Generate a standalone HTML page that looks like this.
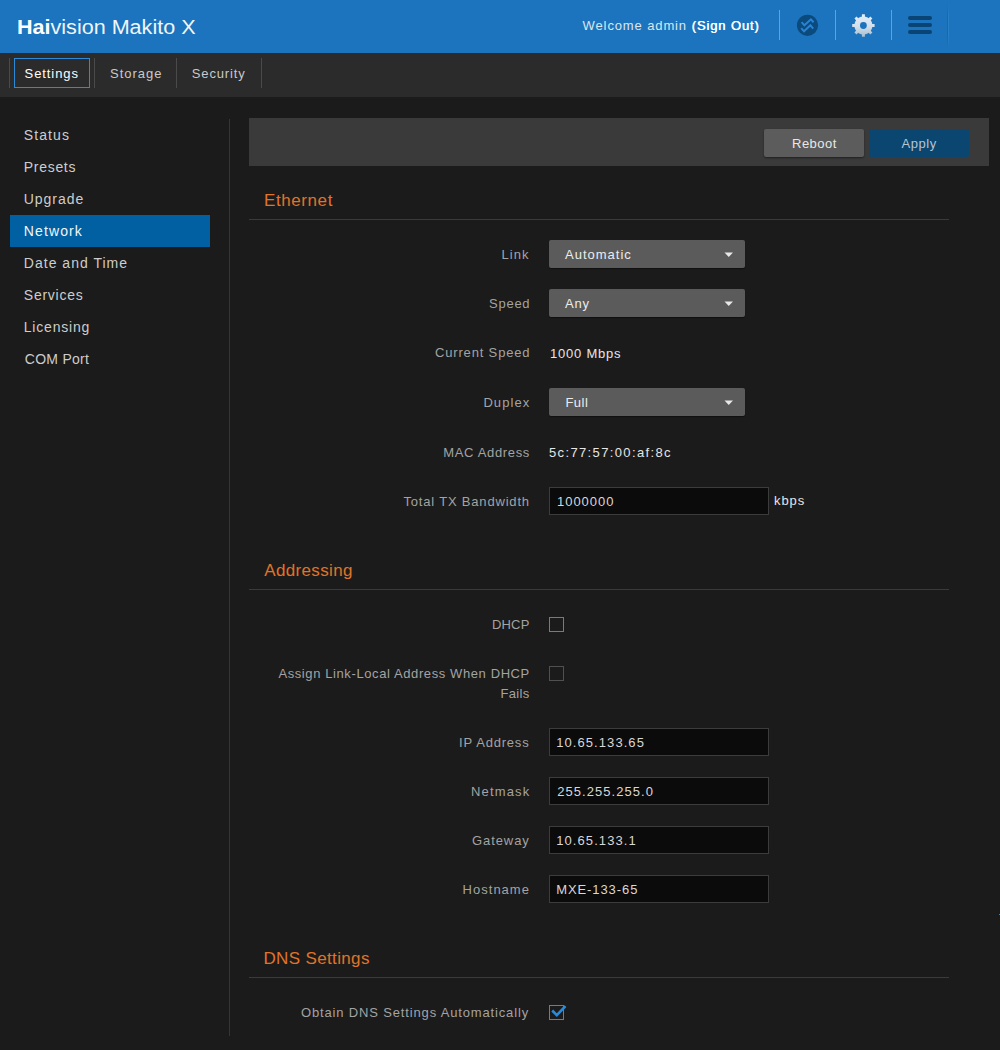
<!DOCTYPE html>
<html><head><meta charset="utf-8"><title>Haivision Makito X - Network</title>
<style>
html,body{margin:0;padding:0;}
body{width:1000px;height:1050px;overflow:hidden;background:#1b1b1b;position:relative;font-family:"Liberation Sans",sans-serif;}
.t{position:absolute;white-space:nowrap;line-height:normal;font-family:"Liberation Sans",sans-serif;}
.b{position:absolute;box-sizing:border-box;}
</style></head><body>
<!-- header -->
<div class="b" style="left:0;top:0;width:1000px;height:53px;background:#1b74bd"></div>
<div class="b" style="left:779px;top:10px;width:1px;height:30px;background:#6b9fcc"></div>
<div class="b" style="left:835px;top:10px;width:1px;height:30px;background:#6b9fcc"></div>
<div class="b" style="left:891px;top:10px;width:1px;height:30px;background:#6b9fcc"></div>
<div class="b" style="left:947px;top:4px;width:1px;height:44px;background:linear-gradient(#1b74bd,#1868ad 30%,#1868ad 70%,#1b74bd)"></div>
<div class="b" style="left:948px;top:4px;width:1px;height:44px;background:linear-gradient(#1b74bd,#2a80c6 30%,#2a80c6 70%,#1b74bd)"></div>
<svg class="b" style="left:790px;top:8px" width="36" height="36" viewBox="790 8 36 36">
 <circle cx="807.5" cy="25.3" r="10.6" fill="#0a4a7c"/>
 <polyline points="801.6,22.2 804.4,25.3 810.9,19.3 813.6,22.2" fill="none" stroke="#2a82d0" stroke-width="2"/>
 <polyline points="801.2,28.2 804,31.3 810.4,25.3 813.2,28.6" fill="none" stroke="#2a82d0" stroke-width="2"/>
</svg>
<svg class="b" style="left:848px;top:10px" width="32" height="32" viewBox="848 10 32 32">
 <defs><linearGradient id="gg" x1="0" y1="0" x2="0" y2="1"><stop offset="0" stop-color="#e4eef7"/><stop offset="0.55" stop-color="#d2dfeb"/><stop offset="1" stop-color="#a8bccc"/></linearGradient></defs>
 <path d="M861.84 16.64 L861.93 14.30 L864.87 14.30 L864.96 16.64 L865.92 16.86 L866.84 17.19 L867.73 17.61 L868.56 18.13 L870.28 16.54 L872.36 18.62 L870.77 20.34 L871.29 21.17 L871.71 22.06 L872.04 22.98 L872.26 23.94 L874.60 24.03 L874.60 26.97 L872.26 27.06 L872.04 28.02 L871.71 28.94 L871.29 29.83 L870.77 30.66 L872.36 32.38 L870.28 34.46 L868.56 32.87 L867.73 33.39 L866.84 33.81 L865.92 34.14 L864.96 34.36 L864.87 36.70 L861.93 36.70 L861.84 34.36 L860.88 34.14 L859.96 33.81 L859.07 33.39 L858.24 32.87 L856.52 34.46 L854.44 32.38 L856.03 30.66 L855.51 29.83 L855.09 28.94 L854.76 28.02 L854.54 27.06 L852.20 26.97 L852.20 24.03 L854.54 23.94 L854.76 22.98 L855.09 22.06 L855.51 21.17 L856.03 20.34 L854.44 18.62 L856.52 16.54 L858.24 18.13 L859.07 17.61 L859.96 17.19 L860.88 16.86 Z M863.4 22.1 A3.4 3.4 0 1 0 863.4 28.9 A3.4 3.4 0 1 0 863.4 22.1 Z" fill="url(#gg)" fill-rule="evenodd"/>
</svg>
<div class="b" style="left:908px;top:16px;width:24px;height:4px;border-radius:2px;background:#0a4474"></div>
<div class="b" style="left:908px;top:23px;width:24px;height:4px;border-radius:2px;background:#0a4474"></div>
<div class="b" style="left:908px;top:30px;width:24px;height:4px;border-radius:2px;background:#0a4474"></div>
<!-- tab bar -->
<div class="b" style="left:0;top:53px;width:1000px;height:44px;background:#2b2b2b"></div>
<div class="b" style="left:9px;top:58px;width:1px;height:30px;background:#4a4a4a"></div>
<div class="b" style="left:14px;top:58px;width:76px;height:30px;border:1px solid #2a8ad8"></div>
<div class="b" style="left:94px;top:58px;width:1px;height:30px;background:#4a4a4a"></div>
<div class="b" style="left:176px;top:58px;width:1px;height:30px;background:#4a4a4a"></div>
<div class="b" style="left:261px;top:58px;width:1px;height:30px;background:#4a4a4a"></div>
<!-- sidebar -->
<div class="b" style="left:10px;top:215px;width:200px;height:32px;background:#0060a2"></div>
<div class="b" style="left:229px;top:119px;width:1px;height:917px;background:#353535"></div>
<!-- toolbar -->
<div class="b" style="left:249px;top:118px;width:740px;height:48px;background:#3a3a3a"></div>
<div class="b" style="left:764px;top:129px;width:100px;height:28px;background:#5c5c5c;border-radius:2px;box-shadow:0 1px 2px rgba(0,0,0,.45)"></div>
<div class="b" style="left:869px;top:129px;width:100px;height:28px;background:#0b4671;border-radius:2px"></div>
<!-- section dividers -->
<div class="b" style="left:249px;top:219px;width:700px;height:1px;background:#3a3a3a"></div>
<div class="b" style="left:249px;top:589px;width:700px;height:1px;background:#3a3a3a"></div>
<div class="b" style="left:249px;top:977px;width:700px;height:1px;background:#3a3a3a"></div>
<!-- selects -->
<div class="b" style="left:549px;top:240px;width:196px;height:28px;background:#5b5b5b;border-radius:2px;box-shadow:0 1px 1px rgba(0,0,0,.4)"></div>
<div class="b" style="left:549px;top:289px;width:196px;height:28px;background:#5b5b5b;border-radius:2px;box-shadow:0 1px 1px rgba(0,0,0,.4)"></div>
<div class="b" style="left:549px;top:388px;width:196px;height:28px;background:#5b5b5b;border-radius:2px;box-shadow:0 1px 1px rgba(0,0,0,.4)"></div>
<svg class="b" style="left:724px;top:252px" width="10" height="6"><path d="M0.5 0.5 H9 L4.75 5 Z" fill="#e8e8e8"/></svg>
<svg class="b" style="left:724px;top:301px" width="10" height="6"><path d="M0.5 0.5 H9 L4.75 5 Z" fill="#e8e8e8"/></svg>
<svg class="b" style="left:724px;top:400px" width="10" height="6"><path d="M0.5 0.5 H9 L4.75 5 Z" fill="#e8e8e8"/></svg>
<!-- inputs -->
<div class="b" style="left:549px;top:487px;width:220px;height:28px;background:#0b0b0b;border:1px solid #3c3c3c"></div>
<div class="b" style="left:549px;top:728px;width:220px;height:28px;background:#0b0b0b;border:1px solid #3c3c3c"></div>
<div class="b" style="left:549px;top:777px;width:220px;height:28px;background:#0b0b0b;border:1px solid #3c3c3c"></div>
<div class="b" style="left:549px;top:826px;width:220px;height:28px;background:#0b0b0b;border:1px solid #3c3c3c"></div>
<div class="b" style="left:549px;top:875px;width:220px;height:28px;background:#0b0b0b;border:1px solid #3c3c3c"></div>
<!-- checkboxes -->
<div class="b" style="left:549px;top:617px;width:15px;height:15px;border:1px solid #7a7a7a"></div>
<div class="b" style="left:549px;top:666px;width:15px;height:15px;border:1px solid #505050"></div>
<div class="b" style="left:549px;top:1005px;width:15px;height:15px;border:1px solid #7a7a7a"></div>
<svg class="b" style="left:548px;top:1002px" width="20" height="20" viewBox="548 1002 20 20"><polyline points="552.2,1010.5 556.8,1015.2 565.5,1006.2" fill="none" stroke="#2b8ad6" stroke-width="2.6" stroke-linecap="butt"/></svg>
<div class="b" style="left:999px;top:914px;width:1px;height:1px;background:#2a8ad8"></div>
<div class="t" id="logo" style="left:16.6px;top:16px;font-size:20px;color:#fff;transform:scaleX(1.078);transform-origin:0 0"><b style="font-weight:700">Hai</b><span style="color:#f2f5f8">vision Makito X</span></div>
<div id="welcome" class="t" style="left:582.60px;top:18.20px;font-size:13px;color:#dde6ee;letter-spacing:0.878px">Welcome admin <span style="color:#fff;text-shadow:0.5px 0 0 #fff">(Sign Out)</span></div>
<div id="tab1" class="t" style="left:24.60px;top:66.00px;font-size:13px;color:#ffffff;letter-spacing:0.914px">Settings</div>
<div id="tab2" class="t" style="left:110.00px;top:66.00px;font-size:13px;color:#c9c9c9;letter-spacing:1.000px">Storage</div>
<div id="tab3" class="t" style="left:191.80px;top:66.00px;font-size:13px;color:#c9c9c9;letter-spacing:0.857px">Security</div>
<div id="side0" class="t" style="left:23.80px;top:127.00px;font-size:14px;color:#cdcdcd;letter-spacing:1.080px">Status</div>
<div id="side1" class="t" style="left:23.80px;top:159.00px;font-size:14px;color:#cdcdcd;letter-spacing:0.700px">Presets</div>
<div id="side2" class="t" style="left:23.80px;top:191.00px;font-size:14px;color:#cdcdcd;letter-spacing:0.950px">Upgrade</div>
<div id="side3" class="t" style="left:23.80px;top:223.00px;font-size:14px;color:#f4f4f4;letter-spacing:1.117px">Network</div>
<div id="side4" class="t" style="left:23.80px;top:255.00px;font-size:14px;color:#cdcdcd;letter-spacing:1.017px">Date and Time</div>
<div id="side5" class="t" style="left:23.80px;top:287.00px;font-size:14px;color:#cdcdcd;letter-spacing:0.743px">Services</div>
<div id="side6" class="t" style="left:23.80px;top:319.00px;font-size:14px;color:#cdcdcd;letter-spacing:0.787px">Licensing</div>
<div id="side7" class="t" style="left:24.80px;top:351.00px;font-size:14px;color:#cdcdcd;letter-spacing:0.271px">COM Port</div>
<div id="reboot" class="t" style="left:792.00px;top:136.00px;font-size:13px;color:#e8e8e8;letter-spacing:0.500px">Reboot</div>
<div id="apply" class="t" style="left:901.60px;top:136.00px;font-size:13px;color:#b8c4d0;letter-spacing:0.550px">Apply</div>
<div id="h1" class="t" style="left:264.00px;top:191.00px;font-size:17px;color:#e07428;letter-spacing:0.586px">Ethernet</div>
<div id="h2" class="t" style="left:264.20px;top:561.00px;font-size:17px;color:#e07428;letter-spacing:0.356px">Addressing</div>
<div id="h3" class="t" style="left:263.40px;top:949.00px;font-size:17px;color:#e07428;letter-spacing:0.364px">DNS Settings</div>
<div id="lbl0" class="t" style="left:501.60px;top:247.20px;font-size:13px;color:#a3a3a3;letter-spacing:1.033px">Link</div>
<div id="lbl1" class="t" style="left:489.00px;top:296.20px;font-size:13px;color:#a3a3a3;letter-spacing:0.750px">Speed</div>
<div id="lbl2" class="t" style="left:435.00px;top:345.00px;font-size:13px;color:#a3a3a3;letter-spacing:0.833px">Current Speed</div>
<div id="lbl3" class="t" style="left:483.40px;top:395.40px;font-size:13px;color:#a3a3a3;letter-spacing:1.080px">Duplex</div>
<div id="lbl4" class="t" style="left:443.20px;top:444.60px;font-size:13px;color:#a3a3a3;letter-spacing:0.670px">MAC Address</div>
<div id="lbl5" class="t" style="left:403.40px;top:494.00px;font-size:13px;color:#a3a3a3;letter-spacing:0.818px">Total TX Bandwidth</div>
<div id="lbl6" class="t" style="left:492.00px;top:617.00px;font-size:13px;color:#a3a3a3;letter-spacing:0.167px">DHCP</div>
<div id="lbl7" class="t" style="left:278.40px;top:666.00px;font-size:13px;color:#a3a3a3;letter-spacing:0.600px">Assign Link-Local Address When DHCP</div>
<div id="lbl8" class="t" style="left:500.40px;top:686.00px;font-size:13px;color:#a3a3a3;letter-spacing:0.350px">Fails</div>
<div id="lbl9" class="t" style="left:459.00px;top:735.40px;font-size:13px;color:#a3a3a3;letter-spacing:0.778px">IP Address</div>
<div id="lbl10" class="t" style="left:471.00px;top:784.40px;font-size:13px;color:#a3a3a3;letter-spacing:1.167px">Netmask</div>
<div id="lbl11" class="t" style="left:472.00px;top:833.40px;font-size:13px;color:#a3a3a3;letter-spacing:0.917px">Gateway</div>
<div id="lbl12" class="t" style="left:462.60px;top:882.40px;font-size:13px;color:#a3a3a3;letter-spacing:1.014px">Hostname</div>
<div id="lbl13" class="t" style="left:301.00px;top:1005.00px;font-size:13px;color:#a3a3a3;letter-spacing:0.844px">Obtain DNS Settings Automatically</div>
<div id="val0" class="t" style="left:565.00px;top:247.00px;font-size:13px;color:#ececec;letter-spacing:1.000px">Automatic</div>
<div id="val1" class="t" style="left:565.00px;top:296.00px;font-size:13px;color:#ececec;letter-spacing:0.750px">Any</div>
<div id="val2" class="t" style="left:550.00px;top:346.40px;font-size:13px;color:#e6e6e6;letter-spacing:0.775px">1000 Mbps</div>
<div id="val3" class="t" style="left:565.40px;top:395.00px;font-size:13px;color:#ececec;letter-spacing:0.500px">Full</div>
<div id="val4" class="t" style="left:549.00px;top:445.00px;font-size:13px;color:#e6e6e6;letter-spacing:1.362px">5c:77:57:00:af:8c</div>
<div id="val5" class="t" style="left:557.00px;top:494.00px;font-size:13px;color:#d8d8d8;letter-spacing:0.967px">1000000</div>
<div id="val6" class="t" style="left:774.00px;top:493.00px;font-size:13px;color:#e6e6e6;letter-spacing:0.900px">kbps</div>
<div id="val7" class="t" style="left:556.20px;top:735.40px;font-size:13px;color:#d8d8d8;letter-spacing:1.073px">10.65.133.65</div>
<div id="val8" class="t" style="left:557.20px;top:784.40px;font-size:13px;color:#d8d8d8;letter-spacing:1.050px">255.255.255.0</div>
<div id="val9" class="t" style="left:556.20px;top:833.40px;font-size:13px;color:#d8d8d8;letter-spacing:1.090px">10.65.133.1</div>
<div id="val10" class="t" style="left:556.20px;top:882.40px;font-size:13px;color:#d8d8d8;letter-spacing:0.911px">MXE-133-65</div>
</body></html>
